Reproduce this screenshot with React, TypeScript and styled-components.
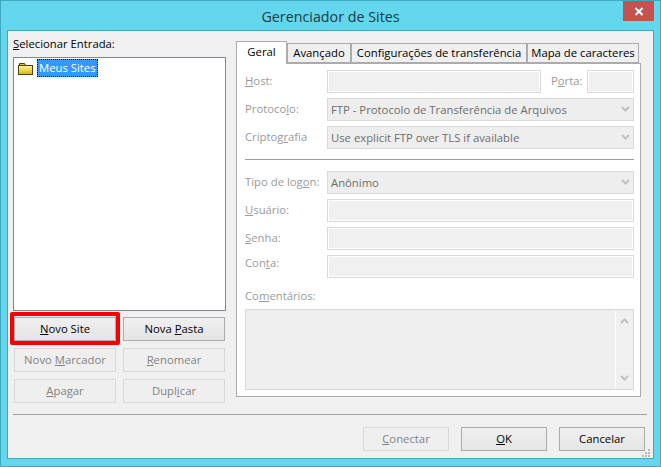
import styled, { createGlobalStyle } from "styled-components";

const GlobalStyle = createGlobalStyle`
  html, body {
    margin: 0;
    padding: 0;
    background: #64d6ee;
  }
  * {
    box-sizing: border-box;
  }
`;

function FolderIcon() {
  return (
    <svg width="15" height="13" viewBox="0 0 15 13">
      <defs>
        <linearGradient id="folderFill" x1="0" y1="0" x2="0" y2="1">
          <stop offset="0" stopColor="#fff6a0" />
          <stop offset="1" stopColor="#d9b800" />
        </linearGradient>
      </defs>
      <path d="M1.5 3.5V1.5h5l1 2z" fill="#d8c040" stroke="#4a4300" />
      <rect x="0.5" y="3.5" width="14" height="9" fill="url(#folderFill)" stroke="#4a4300" />
    </svg>
  );
}

function ChevronDown() {
  return (
    <svg width="9" height="6" viewBox="0 0 9 6">
      <path d="M1 1l3.5 3.5L8 1" fill="none" stroke="#c0c0c0" strokeWidth="2" />
    </svg>
  );
}

function ChevronUp() {
  return (
    <svg width="9" height="6" viewBox="0 0 9 6">
      <path d="M1 5l3.5-3.5L8 5" fill="none" stroke="#c0c0c0" strokeWidth="2" />
    </svg>
  );
}

export default function App() {
  return (
    <>
      <GlobalStyle />
      <Frame>
        <TitleBar>
          <Title>Gerenciador de Sites</Title>
          <CloseButton>
            <svg width="10" height="9" viewBox="0 0 10 9">
              <path d="M1.5 1l7 7M8.5 1l-7 7" stroke="#fff" strokeWidth="2" />
            </svg>
          </CloseButton>
        </TitleBar>
        <Client>
          <Columns>
            <LeftColumn>
              <TreeLabel>
                <u>S</u>elecionar Entrada:
              </TreeLabel>
              <Tree>
                <TreeRow>
                  <FolderIcon />
                  <TreeItem>Meus Sites</TreeItem>
                </TreeRow>
              </Tree>
              <ButtonGrid>
                <HighlightCell>
                  <Button>
                    <u>N</u>ovo Site
                  </Button>
                </HighlightCell>
                <Button>
                  Nova <u>P</u>asta
                </Button>
                <Button disabled>
                  Novo <u>M</u>arcador
                </Button>
                <Button disabled>
                  <u>R</u>enomear
                </Button>
                <Button disabled>
                  <u>A</u>pagar
                </Button>
                <Button disabled>
                  Dupl<u>i</u>car
                </Button>
              </ButtonGrid>
            </LeftColumn>
            <RightColumn>
              <TabRow>
                <Tab $active>Geral</Tab>
                <Tab $width={64}>Avançado</Tab>
                <Tab $width={176}>Configurações de transferência</Tab>
                <Tab $width={112}>Mapa de caracteres</Tab>
              </TabRow>
              <Panel>
                <FieldRow>
                  <FieldLabel>
                    <u>H</u>ost:
                  </FieldLabel>
                  <Input $grow />
                  <PortLabel>
                    P<u>o</u>rta:
                  </PortLabel>
                  <Input $width={47} />
                </FieldRow>
                <FieldRow>
                  <FieldLabel>
                    Protoco<u>l</u>o:
                  </FieldLabel>
                  <Select>
                    FTP - Protocolo de Transferência de Arquivos
                    <ChevronDown />
                  </Select>
                </FieldRow>
                <FieldRow>
                  <FieldLabel>
                    Criptog<u>r</u>afia
                  </FieldLabel>
                  <Select>
                    Use explicit FTP over TLS if available
                    <ChevronDown />
                  </Select>
                </FieldRow>
                <PanelRule />
                <FieldRow>
                  <FieldLabel>
                    Tipo de log<u>o</u>n:
                  </FieldLabel>
                  <Select>
                    Anônimo
                    <ChevronDown />
                  </Select>
                </FieldRow>
                <FieldRow>
                  <FieldLabel $lift={3}>
                    <u>U</u>suário:
                  </FieldLabel>
                  <Input $grow />
                </FieldRow>
                <FieldRow>
                  <FieldLabel $lift={3}>
                    <u>S</u>enha:
                  </FieldLabel>
                  <Input $grow />
                </FieldRow>
                <FieldRow>
                  <FieldLabel $lift={9}>
                    Con<u>t</u>a:
                  </FieldLabel>
                  <Input $grow />
                </FieldRow>
                <CommentsLabel>
                  Co<u>m</u>entários:
                </CommentsLabel>
                <CommentsBox>
                  <ScrollTrack>
                    <ChevronUp />
                    <ChevronDown />
                  </ScrollTrack>
                </CommentsBox>
              </Panel>
            </RightColumn>
          </Columns>
          <FooterRule />
          <Footer>
            <Button disabled>
              <u>C</u>onectar
            </Button>
            <Button>
              <u>O</u>K
            </Button>
            <Button>Cancelar</Button>
          </Footer>
          <Grip>
            <svg width="8" height="8" viewBox="0 0 8 8" fill="#b9b9b9">
              <rect x="6" y="0" width="2" height="2" />
              <rect x="3" y="3" width="2" height="2" />
              <rect x="6" y="3" width="2" height="2" />
              <rect x="0" y="6" width="2" height="2" />
              <rect x="3" y="6" width="2" height="2" />
              <rect x="6" y="6" width="2" height="2" />
            </svg>
          </Grip>
        </Client>
      </Frame>
    </>
  );
}

const Frame = styled.div`
  width: 661px;
  height: 467px;
  padding: 0 6px 7px 6px;
  display: flex;
  flex-direction: column;
  background: #64d6ee;
  border: 1px solid #3fa9bf;
  font-family: "Open Sans", "Liberation Sans", sans-serif;
  font-size: 11.3px;
  color: #000;
`;

const TitleBar = styled.div`
  position: relative;
  height: 29px;
  flex: none;
  display: flex;
  align-items: center;
  justify-content: center;
`;

const Title = styled.div`
  font-size: 14.3px;
  color: #1f3a44;
  margin-top: 1px;
`;

const CloseButton = styled.div`
  position: absolute;
  top: 0;
  right: 0;
  width: 31px;
  height: 20px;
  background: #c75050;
  display: flex;
  align-items: center;
  justify-content: center;
`;

const Client = styled.div`
  position: relative;
  flex: 1;
  display: flex;
  flex-direction: column;
  background: #f0f0f0;
  border: 1px solid #3fa9bf;
  padding: 6px 6px 0 5px;
`;

const Columns = styled.div`
  display: flex;
  gap: 10px;
  height: 367px;
`;

const LeftColumn = styled.div`
  width: 213px;
  display: flex;
  flex-direction: column;
`;

const TreeLabel = styled.div`
  height: 20px;
  line-height: 14px;
`;

const Tree = styled.div`
  height: 254px;
  background: #fff;
  border: 1px solid #828790;
  padding: 1px 4px;
`;

const TreeRow = styled.div`
  display: flex;
  align-items: center;
  gap: 4px;
`;

const TreeItem = styled.div`
  background: #3399ff;
  color: #fff;
  outline: 1px dotted #000;
  outline-offset: -1px;
  height: 18px;
  line-height: 17px;
  padding: 0 2px;
`;

const ButtonGrid = styled.div`
  display: grid;
  grid-template-columns: 102px 102px;
  grid-auto-rows: 24px;
  column-gap: 7px;
  row-gap: 7px;
  padding: 6px 0 0 1px;
`;

const HighlightCell = styled.div`
  position: relative;
  display: flex;
  &::after {
    content: "";
    position: absolute;
    inset: -5px -4px -4px -4px;
    border: 4px solid #f80000;
    border-radius: 2px;
    pointer-events: none;
  }
`;

const Button = styled.button`
  width: 100%;
  height: 24px;
  padding: 0 0 2px;
  font-family: inherit;
  font-size: inherit;
  color: #000;
  background: linear-gradient(#f0f0f0, #e5e5e5);
  border: 1px solid #acacac;
  &:disabled {
    color: #838383;
    background: #efefef;
    border-color: #d9d9d9;
  }
`;

const RightColumn = styled.div`
  width: 405px;
  display: flex;
  flex-direction: column;
`;

const TabRow = styled.div`
  display: flex;
  align-items: flex-end;
  height: 22px;
  margin-top: 4px;
  position: relative;
  z-index: 1;
`;

const Tab = styled.div<{ $active?: boolean; $width?: number }>`
  width: ${(p) => p.$width ?? 51}px;
  height: ${(p) => (p.$active ? 23 : 20)}px;
  margin-bottom: ${(p) => (p.$active ? -1 : 0)}px;
  padding-bottom: ${(p) => (p.$active ? 4 : 1)}px;
  background: ${(p) => (p.$active ? "#fff" : "#f0f0f0")};
  border: 1px solid #acacac;
  border-bottom: ${(p) => (p.$active ? "none" : "1px solid #acacac")};
  display: flex;
  align-items: center;
  justify-content: center;
  white-space: nowrap;
`;

const Panel = styled.div`
  height: 334px;
  background: #fff;
  border: 1px solid #acacac;
  padding: 6px 6px 0 8px;
  display: flex;
  flex-direction: column;
  color: #9a9a9a;
`;

const FieldRow = styled.div`
  display: flex;
  align-items: center;
  height: 23px;
  flex: none;
  margin-bottom: 5px;
`;

const FieldLabel = styled.div<{ $lift?: number }>`
  width: 82px;
  flex: none;
  white-space: nowrap;
  padding-bottom: ${(p) => p.$lift ?? 2}px;
`;

const PortLabel = styled.div`
  width: 46px;
  flex: none;
  padding: 0 0 2px 10px;
`;

const Input = styled.div<{ $grow?: boolean; $width?: number }>`
  ${(p) => (p.$grow ? "flex: 1;" : `width: ${p.$width}px;`)}
  height: 100%;
  background: #f0f0f0;
  border: 1px solid #d9d9d9;
  box-shadow: inset 0 0 0 1px #fff;
`;

const Select = styled.div`
  flex: 1;
  height: 100%;
  background: #eeeeee;
  border: 1px solid #d9d9d9;
  display: flex;
  align-items: center;
  justify-content: space-between;
  padding: 0 3px 1px 3px;
  color: #6d6d6d;
`;

const PanelRule = styled.div`
  height: 1px;
  flex: none;
  background: #a0a0a0;
  margin: 5px 0 11px;
`;

const CommentsLabel = styled.div`
  height: 17px;
  line-height: 16px;
  margin-top: 5px;
  margin-bottom: 4px;
  flex: none;
`;

const CommentsBox = styled.div`
  width: 389px;
  height: 81px;
  flex: none;
  background: #efefef;
  border: 1px solid #d9d9d9;
  display: flex;
  justify-content: flex-end;
  padding: 1px;
`;

const ScrollTrack = styled.div`
  width: 17px;
  background: #f0f0f0;
  border-left: 1px solid #fff;
  display: flex;
  flex-direction: column;
  align-items: center;
  justify-content: space-between;
  padding: 7px 0;
`;

const FooterRule = styled.div`
  height: 1px;
  background: #a0a0a0;
  margin-top: 10px;
`;

const Footer = styled.div`
  display: grid;
  grid-template-columns: repeat(3, 86px);
  column-gap: 12px;
  justify-content: end;
  padding: 12px 2px 0 0;
`;

const Grip = styled.div`
  position: absolute;
  right: 3px;
  bottom: 1px;
  display: flex;
`;
